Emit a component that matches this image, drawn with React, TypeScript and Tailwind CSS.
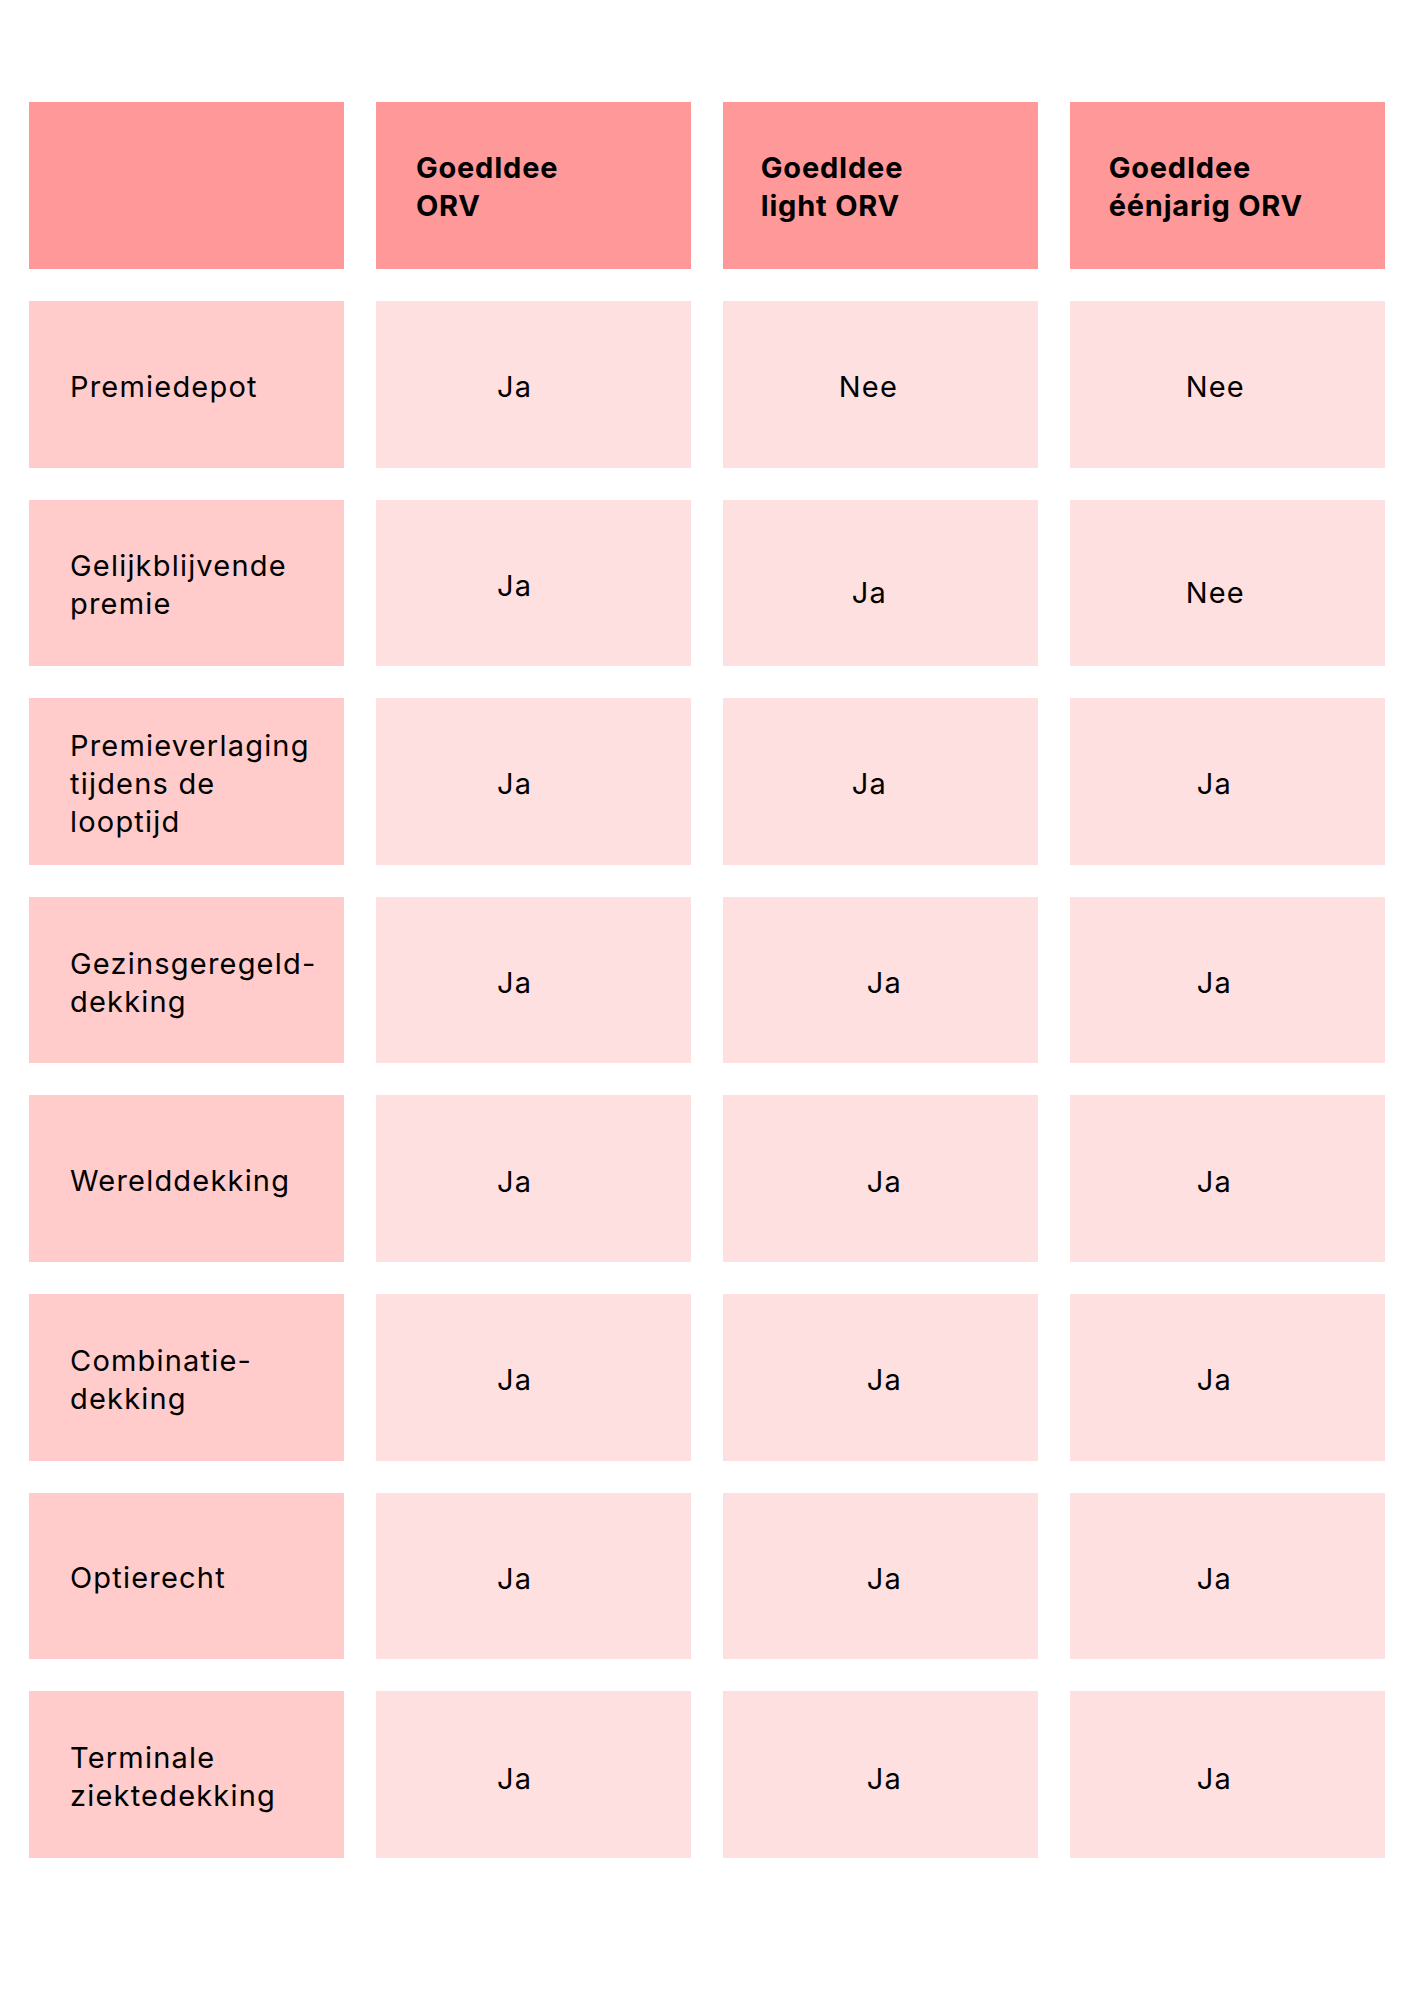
import React from "react";

type Val = { t: string; pl: string; dy?: string };
type Row = { label: string[]; vals: [Val, Val, Val] };

const rows: Row[] = [
  {
    label: ["Premiedepot"],
    vals: [
      { t: "Ja", pl: "pl-[121px]" },
      { t: "Nee", pl: "pl-[116px]" },
      { t: "Nee", pl: "pl-[116px]" },
    ],
  },
  {
    label: ["Gelijkblijvende", "premie"],
    vals: [
      { t: "Ja", pl: "pl-[121px]" },
      { t: "Ja", pl: "pl-[129px]", dy: "pt-[21px]" },
      { t: "Nee", pl: "pl-[116px]", dy: "pt-[21px]" },
    ],
  },
  {
    label: ["Premieverlaging", "tijdens de", "looptijd"],
    vals: [
      { t: "Ja", pl: "pl-[121px]" },
      { t: "Ja", pl: "pl-[129px]" },
      { t: "Ja", pl: "pl-[127px]" },
    ],
  },
  {
    label: ["Gezinsgeregeld-", "dekking"],
    vals: [
      { t: "Ja", pl: "pl-[121px]" },
      { t: "Ja", pl: "pl-[144px]" },
      { t: "Ja", pl: "pl-[127px]" },
    ],
  },
  {
    label: ["Werelddekking"],
    vals: [
      { t: "Ja", pl: "pl-[121px]" },
      { t: "Ja", pl: "pl-[144px]" },
      { t: "Ja", pl: "pl-[127px]" },
    ],
  },
  {
    label: ["Combinatie-", "dekking"],
    vals: [
      { t: "Ja", pl: "pl-[121px]" },
      { t: "Ja", pl: "pl-[144px]" },
      { t: "Ja", pl: "pl-[127px]" },
    ],
  },
  {
    label: ["Optierecht"],
    vals: [
      { t: "Ja", pl: "pl-[121px]" },
      { t: "Ja", pl: "pl-[144px]" },
      { t: "Ja", pl: "pl-[127px]" },
    ],
  },
  {
    label: ["Terminale", "ziektedekking"],
    vals: [
      { t: "Ja", pl: "pl-[121px]", dy: "pt-[9px]" },
      { t: "Ja", pl: "pl-[144px]", dy: "pt-[9px]" },
      { t: "Ja", pl: "pl-[127px]", dy: "pt-[9px]" },
    ],
  },
];

const headers: { lines: string[]; pl: string }[] = [
  { lines: ["GoedIdee", "ORV"], pl: "pl-[40px]" },
  { lines: ["GoedIdee", "light ORV"], pl: "pl-[38px]" },
  { lines: ["GoedIdee", "éénjarig ORV"], pl: "pl-[39px]" },
];

export default function App() {
  return (
    <div
      className="w-[1414px] h-[2000px] bg-white text-black pt-[102px] pl-[29px]"
      style={{ fontFamily: "Inter, 'Open Sans', 'Liberation Sans', sans-serif" }}
    >
      <div className="w-[1356px] grid grid-cols-4 gap-x-[31.5px] gap-y-[32px]">
        <div className="h-[167px] bg-[#ff9999]" />
        {headers.map((h, i) => (
          <div
            key={i}
            className={`h-[167px] bg-[#ff9999] flex flex-col justify-center ${h.pl} pt-[3px] text-[29px] leading-[38px] font-bold tracking-[0.8px] whitespace-nowrap`}
          >
            {h.lines.map((l, j) => (
              <div key={j}>{l}</div>
            ))}
          </div>
        ))}
        {rows.map((r, i) => (
          <React.Fragment key={i}>
            <div className="h-[166.6px] bg-[#ffcbcb] flex flex-col justify-center pl-[41px] pt-[5px] text-[29px] leading-[38px] tracking-[1.2px] whitespace-nowrap">
              {r.label.map((l, j) => (
                <div key={j}>{l}</div>
              ))}
            </div>
            {r.vals.map((v, j) => (
              <div
                key={j}
                className={`h-[166.6px] bg-[#ffe0e1] flex items-center ${v.pl} ${v.dy ?? "pt-[6px]"} text-[29px] leading-[38px] tracking-[1.2px] whitespace-nowrap`}
              >
                {v.t}
              </div>
            ))}
          </React.Fragment>
        ))}
      </div>
    </div>
  );
}
